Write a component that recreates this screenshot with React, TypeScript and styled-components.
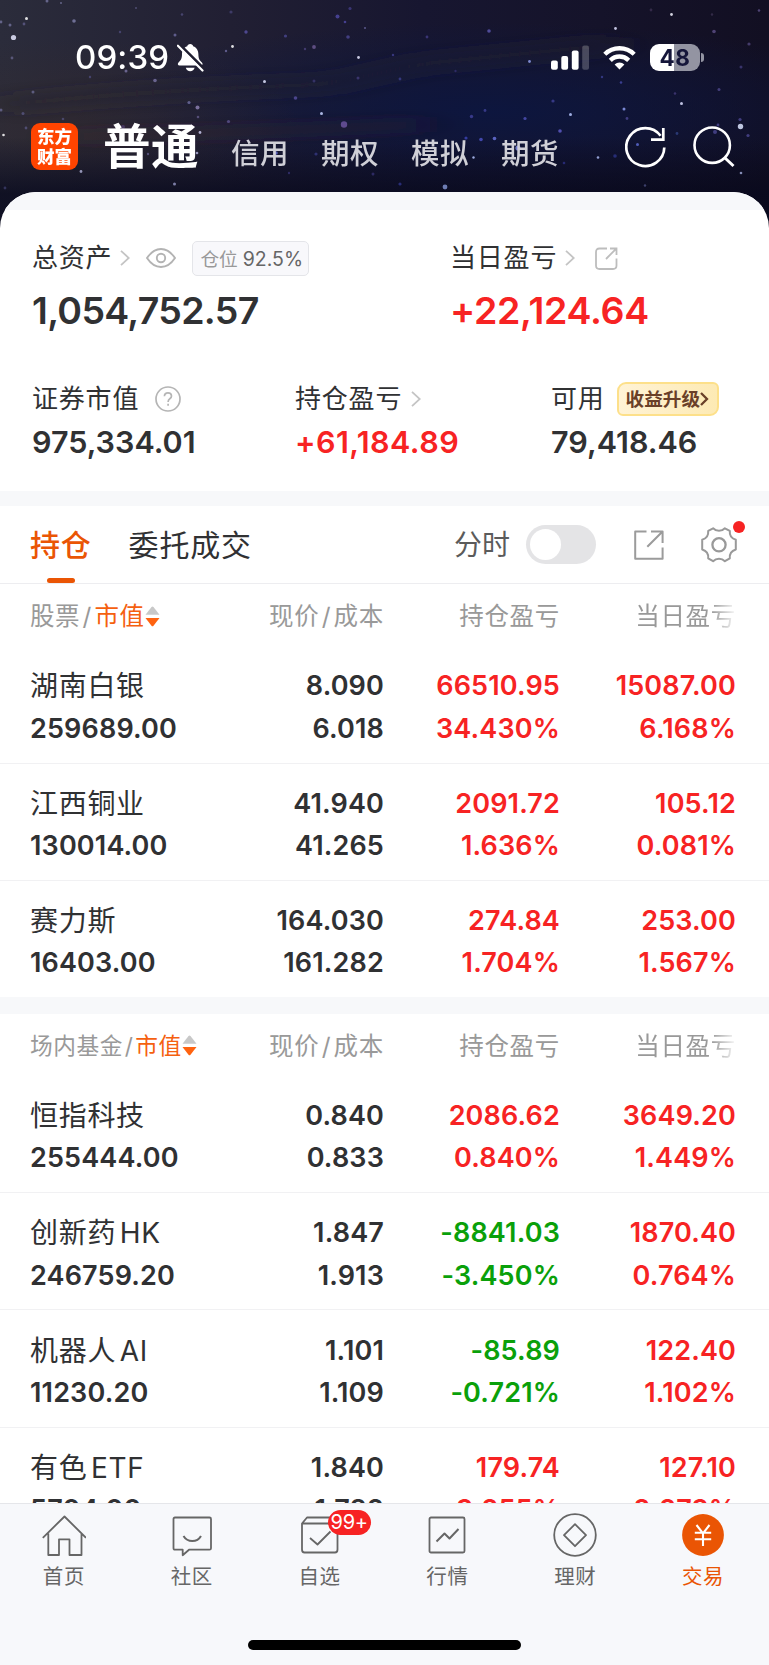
import React from 'react';
import styled, { createGlobalStyle } from 'styled-components';

const ORANGE = '#ea5504';
const RED = '#f72323';
const GREEN = '#0aa00a';
const INK = '#303133';

const GlobalStyle = createGlobalStyle`
  *, *::before, *::after { box-sizing: border-box; }
  html, body { margin: 0; padding: 0; }
  body {
    font-family: Inter, 'Noto Sans CJK SC', sans-serif;
    color: ${INK};
    background: #fff;
  }
`;

const Screen = styled.div`
  display: flex;
  flex-direction: column;
  width: 769px;
  height: 1665px;
  overflow: hidden;
  background: #fff;
`;

/* ---------- header ---------- */

const Header = styled.header`
  position: relative;
  flex: none;
  height: 228px;
  padding-top: 36px;
  color: #fff;
  background:
    linear-gradient(180deg, transparent 60%, rgba(7, 8, 28, 0.75) 85%),
    radial-gradient(ellipse 230px 90px at 70px 128px, rgba(52, 42, 44, 0.55), transparent 100%),
    radial-gradient(ellipse 420px 90px at 490px 112px, rgba(12, 22, 64, 0.9), transparent 100%),
    linear-gradient(90deg, #2b2c3b 0%, #211f33 30%, #171630 55%, #15132a 78%, #120f22 100%);
`;

const Sky = styled.svg`
  position: absolute;
  inset: 0;
`;

const StatusBar = styled.div`
  position: relative;
  display: flex;
  align-items: center;
  height: 42px;
  padding: 0 69px 0 75px;
`;

const Clock = styled.span`
  width: 102px;
  font-size: 33px;
  font-weight: 500;
  line-height: 42px;
  letter-spacing: 0.1px;
`;

const StatusIcons = styled.div`
  display: flex;
  align-items: center;
  gap: 14px;
  margin-left: auto;
`;

const Battery = styled.div`
  position: relative;
  width: 50px;
  height: 27px;
  border-radius: 9px;
  background: linear-gradient(90deg, #fff 48%, #9394a2 48%);
  color: #15163a;
  font-size: 22.5px;
  font-weight: 700;
  line-height: 27px;
  letter-spacing: 0.5px;
  text-align: center;

  &::after {
    content: '';
    position: absolute;
    left: 51px;
    top: 9px;
    width: 3px;
    height: 9px;
    border-radius: 0 4px 4px 0;
    background: #9394a2;
  }
`;

const AccountBar = styled.div`
  position: relative;
  display: flex;
  align-items: center;
  height: 47px;
  margin-top: 45px;
  padding: 0 34px 0 31px;
`;

const Logo = styled.div`
  display: flex;
  flex-direction: column;
  justify-content: center;
  align-items: center;
  width: 47px;
  height: 47px;
  border-radius: 9px;
  background: #ff4400;
  font-size: 17.5px;
  font-weight: 900;
  line-height: 19.5px;
`;

const ActiveAccount = styled.span`
  width: 128px;
  margin-left: 25px;
  font-size: 47.5px;
  font-weight: 700;
  line-height: 47px;
  letter-spacing: 0.5px;
`;

const Account = styled.span`
  width: 90px;
  padding-top: 15px;
  color: #d0d0d7;
  font-size: 28.5px;
  font-weight: 500;
  line-height: 34px;
  letter-spacing: 0.6px;
  white-space: nowrap;
`;

const HeaderActions = styled.div`
  display: flex;
  gap: 26px;
  margin-left: auto;
`;

/* ---------- summary ---------- */

const Sheet = styled.main`
  position: relative;
  display: flex;
  flex-direction: column;
  flex: 1;
  min-height: 0;
  margin-top: -36.5px;
  border-radius: 36px 36px 0 0;
  background: #fff;
  overflow: hidden;
`;

const Summary = styled.section`
  flex: none;
  height: 280.5px;
  padding: 28.4px 0 0 32px;
`;

const SummaryRow = styled.div<{ $columns: string }>`
  display: grid;
  grid-template-columns: ${(p) => p.$columns};
`;

const SecondRow = styled(SummaryRow)`
  margin-top: 34.2px;
`;

const Label = styled.div`
  display: flex;
  align-items: center;
  height: 40px;
  font-size: 26px;
  line-height: 40px;
  letter-spacing: 0.8px;
  white-space: nowrap;

  svg { flex: none; }
`;

const Total = styled.div<{ $color?: string }>`
  height: 66px;
  font-size: 37.5px;
  font-weight: 600;
  line-height: 66px;
  letter-spacing: ${(p) => (p.$color ? -0.3 : -0.7)}px;
  color: ${(p) => p.$color ?? INK};
`;

const Amount = styled.div<{ $color?: string }>`
  font-size: 30.5px;
  font-weight: 600;
  line-height: 46px;
  letter-spacing: ${(p) => (p.$color ? 0.45 : 0)}px;
  color: ${(p) => p.$color ?? INK};
`;

const PositionTag = styled.div`
  height: 35px;
  width: 117px;
  margin-left: 16px;
  padding-left: 7px;
  border: 1px solid #e4e5e9;
  border-radius: 5px;
  background: #f8f8fb;
  color: #666;
  font-size: 19.5px;
  line-height: 34px;
  letter-spacing: 0;

  span { color: #999; font-size: 18.7px; margin-right: 5px; }
`;

const Upgrade = styled.div`
  display: flex;
  align-items: center;
  width: 102px;
  height: 34px;
  margin-left: 12px;
  padding-left: 7px;
  border: 2px solid #fde08a;
  border-radius: 9px 6px 9px 6px;
  background: linear-gradient(90deg, #fff3d6, #fdeab4);
  color: #6a4028;
  font-size: 18.6px;
  font-weight: 700;
  line-height: 30px;
  letter-spacing: 0;
`;

const Band = styled.div<{ $height: number }>`
  flex: none;
  height: ${(p) => p.$height}px;
  background: #f7f8fa;
`;

/* ---------- tabs ---------- */

const Tabs = styled.nav`
  display: flex;
  align-items: center;
  flex: none;
  height: 78.5px;
  padding: 0 32px 0 30px;
  border-bottom: 1px solid #ededf0;
`;

const Tab = styled.div<{ $active?: boolean }>`
  position: relative;
  height: 77.5px;
  margin-right: 37px;
  color: ${(p) => (p.$active ? ORANGE : INK)};
  font-size: 30px;
  font-weight: ${(p) => (p.$active ? 500 : 400)};
  line-height: 78px;
  letter-spacing: 0.8px;

  &::after {
    content: '';
    display: ${(p) => (p.$active ? 'block' : 'none')};
    position: absolute;
    left: 17px;
    bottom: 0;
    width: 27.5px;
    height: 5.5px;
    border-radius: 3px;
    background: ${ORANGE};
  }
`;

const TabTools = styled.div`
  display: flex;
  align-items: center;
  margin-left: auto;
  padding-top: 0.8px;
  color: #5b5b5b;
  font-size: 28px;
  line-height: 40px;
`;

const Toggle = styled.div`
  width: 70px;
  height: 39px;
  margin: 0 38px 0 16px;
  padding: 4px;
  border-radius: 20px;
  background: #e4e4e6;

  &::after {
    content: '';
    display: block;
    width: 31px;
    height: 31px;
    border-radius: 50%;
    background: #fff;
  }
`;

const Settings = styled.div`
  position: relative;
  width: 36px;
  height: 36px;
  margin-left: 37px;

  &::after {
    content: '';
    position: absolute;
    top: -6px;
    right: -7.5px;
    width: 12px;
    height: 12px;
    border-radius: 50%;
    background: ${RED};
  }
`;

/* ---------- holdings ---------- */

const columns = '203px 151px 176px 176px';

const ListHeader = styled.div`
  display: grid;
  grid-template-columns: ${columns};
  flex: none;
  height: 62.2px;
  padding-left: 30px;
  color: #999;
  font-size: 24.5px;
  line-height: 64px;
  text-align: right;
  letter-spacing: 0.7px;
  white-space: nowrap;
`;

const Slash = styled.span`
  margin: 0 2.3px;
`;

const SortCell = styled.div<{ $compact?: boolean }>`
  display: flex;
  align-items: center;
  height: 64px;
  font-size: ${(p) => (p.$compact ? 22.7 : 24.5)}px;
  letter-spacing: ${(p) => (p.$compact ? 0.6 : 0.6)}px;

  b { color: #f5600f; font-weight: 400; }
  ${Slash} { margin: 0 ${(p) => (p.$compact ? 1.7 : 2.4)}px; }
`;

const FadingCell = styled.div`
  mask-image: linear-gradient(90deg, #000 86%, transparent 101%);
`;

const Holding = styled.div`
  display: grid;
  grid-template-columns: ${columns};
  flex: none;
  height: 117.33px;
  padding: 19.2px 0 0 30px;
  border-bottom: 1px solid #f1f1f3;
  font-size: 27px;
  font-weight: 600;
  line-height: 42.4px;
  letter-spacing: 0.15px;
  text-align: right;
  white-space: nowrap;

  &:last-child { height: 116.33px; border-bottom: 0; }
`;

const NameCell = styled.div`
  text-align: left;
`;

const Name = styled.div`
  font-size: 28px;
  font-weight: 400;
  letter-spacing: 0.7px;
  word-spacing: -5px;
`;

const ValueCell = styled.div<{ $color?: string }>`
  color: ${(p) => p.$color ?? INK};
`;

const HoldingList = styled.section`
  display: flex;
  flex-direction: column;
  flex: none;
`;

const Scroller = styled.div`
  flex: 1;
  min-height: 0;
  overflow: hidden;
`;

/* ---------- bottom bar ---------- */

const BottomBar = styled.footer`
  display: flex;
  flex-direction: column;
  align-items: center;
  flex: none;
  height: 162px;
  border-top: 1px solid #e5e6ea;
  background: #f7f8fb;
`;

const NavItems = styled.div`
  display: grid;
  grid-template-columns: repeat(6, 1fr);
  width: 100%;
  height: 135.5px;
  padding: 8.5px 2px 0 0;
`;

const NavItem = styled.div<{ $active?: boolean }>`
  position: relative;
  display: flex;
  flex-direction: column;
  align-items: center;
  color: ${(p) => (p.$active ? ORANGE : '#666')};
  font-size: 20.5px;
  line-height: 34px;
  letter-spacing: 0.6px;
`;

const Badge = styled.span`
  position: absolute;
  top: -3px;
  left: 72px;
  width: 43px;
  height: 25px;
  border-radius: 13px;
  background: ${RED};
  color: #fff;
  font-size: 20px;
  line-height: 25px;
  letter-spacing: -0.2px;
  text-align: center;
`;

const HomeIndicator = styled.div`
  width: 273px;
  height: 10px;
  border-radius: 5px;
  background: #000;
`;

const Gap = styled.span<{ $w: number }>`
  flex: none;
  width: ${(p) => p.$w}px;
`;

/* ---------- drawings ---------- */

const stars: [number, number, number, string][] = [
  [13.5, 37.5, 2.6, '#e6e8ff'], [26.5, 18.5, 1.5, '#fff'], [10, 25, 1.5, '#6f6f98'], [24, 24, 1.4, '#5c5a85'],
  [1, 22, 1.4, '#6f6f98'], [47, 1, 1.5, '#6f6f98'], [61, 3, 1, '#6f6f98'], [74, 21, 1.8, '#7b7ba6'],
  [12, 58, 1.4, '#615f85'], [33, 92, 1.5, '#66648c'], [1, 110, 1.5, '#66648c'], [23, 113.5, 1.5, '#55537c'],
  [3.5, 135, 1.3, '#fff'], [26, 128, 1.4, '#55537c'], [63, 119, 1.3, '#4f4c73'], [81, 171.5, 1.4, '#a9aad0'],
  [5, 188, 1.4, '#3b3a66'], [136, 8, 1, '#55537c'], [182, 14.5, 1.3, '#4c4a77'], [120, 32, 1.2, '#4c4a77'],
  [175, 35, 1.5, '#6a679b'], [155, 80.5, 1.8, '#75709f'], [90, 77, 1.2, '#4c4a77'], [126, 71, 1.5, '#75709f'],
  [189, 102.5, 1.6, '#6b6a9c'], [197.5, 107.5, 2, '#8b7fb0'], [198, 117, 1.3, '#5d5684'], [200, 132.5, 1.4, '#c9c8ec'],
  [123, 127, 2, '#4d3c66'], [174.5, 184, 1.5, '#8f90bd'], [197, 153, 1.3, '#aaa9d4'], [148, 154, 1.2, '#5d5684'],
  [232.5, 46.5, 1.4, '#fff'], [226, 51, 1.2, '#6a679b'], [246, 32, 1.7, '#5650a0'], [231, 12, 1.6, '#423f70'],
  [285.5, 36, 1.6, '#48448c'], [314, 47, 1.9, '#6a5790'], [305, 49, 1.2, '#494277'], [337.5, 16.5, 2, '#4d48a0'],
  [350, 8.5, 1.6, '#3f3b80'], [345, 22, 1.3, '#4d48a0'], [348, 37, 1.8, '#4a458e'], [358.5, 57.5, 1.4, '#e8e8ff'],
  [365, 28, 1, '#66649c'], [264.5, 81.5, 1.5, '#e2e5ff'], [314, 81, 1.5, '#3b366c'], [358, 78, 1.5, '#3e3975'],
  [295.5, 98, 1.8, '#554d9b'], [321.5, 113.5, 1.5, '#c5d1ff'], [344, 124.5, 3.2, '#6b539d'], [228.5, 121.5, 1.6, '#59508a'],
  [316, 154, 1.6, '#34357c'], [276, 153, 1.8, '#6870cc'], [373, 174, 1.5, '#31306d'], [289, 173, 1.2, '#31306d'],
  [489, 31, 1.8, '#5a55aa'], [427, 37, 1.4, '#3f3b80'], [393, 55, 1.2, '#3f3f88'], [529.5, 61.5, 1.4, '#8e9bea'],
  [400, 79, 1.4, '#3b3c88'], [455.5, 71, 1.2, '#31306d'], [615.5, 28.5, 1.4, '#dfe0ff'], [671.5, 14.5, 1.4, '#f3f3ff'],
  [714, 31.5, 1.8, '#5a4c82'], [651, 10, 1.4, '#38304f'], [712, 14.5, 1.2, '#38304f'], [759, 10.5, 1.3, '#5a4c82'],
  [749, 44, 1.6, '#4d4377'], [741, 67, 1.5, '#3e3975'], [719, 89.5, 1.5, '#4d4788'], [681.5, 103.5, 1.5, '#dcdfff'],
  [675, 93.5, 1.3, '#3e3975'], [621, 82.5, 1.3, '#4347a0'], [602, 77, 1.2, '#3c3e8d'], [553, 101, 1.6, '#3d3f93'],
  [485, 110.5, 1.4, '#3d3f93'], [471.5, 116.5, 1.7, '#3f3f97'], [570.5, 114.5, 1.5, '#b7c7ff'], [525, 118.5, 1.6, '#4d50b5'],
  [624, 109, 1.5, '#8d9cf0'], [627, 118.5, 1.4, '#4a458e'], [560, 131, 1.8, '#5c5ac4'], [466, 138, 1.6, '#3b42b0'],
  [481, 139.5, 1.8, '#4a50c0'], [494.5, 138.5, 1.8, '#6872d9'], [518, 148, 2.6, '#7f8ce5'], [598, 157.5, 1.3, '#a8b6ef'],
  [473.5, 157.5, 1.2, '#b7c7ff'], [637.5, 144.5, 1.5, '#5c68cf'], [740.5, 126.5, 2.7, '#dde6ff'], [740, 119.5, 1.6, '#4a458e'],
  [715, 132, 2, '#4a458e'], [748, 135.5, 1.6, '#4a458e'], [677, 133.5, 1.4, '#2e3f7f'], [741, 173, 1.3, '#9aa3d0'],
  [445, 187, 2.4, '#7f90cc'], [400, 184, 1.6, '#2f3184'], [615, 156, 1.8, '#2c3184'], [645, 185.5, 1.2, '#464a78'],
  [718, 125, 1.4, '#4a458e'], [564, 163, 1.3, '#2b3080'],
];

const StarField = () => (
  <Sky width="769" height="228" viewBox="0 0 769 228">
    <defs>
      <filter id="haze" x="-20%" y="-200%" width="140%" height="500%">
        <feGaussianBlur stdDeviation="22 7" />
      </filter>
      <filter id="glow"><feGaussianBlur stdDeviation="0.6" /></filter>
    </defs>
    <g filter="url(#haze)" fill="none">
      <path d="M0 106Q110 92 330 84L420 64L620 44" stroke="#2b2530" strokeWidth="16" opacity="0.4" />
      <path d="M60 137Q240 133 430 124" stroke="#33262f" strokeWidth="8" opacity="0.45" />
    </g>
    <g filter="url(#glow)">
      {stars.map(([x, y, r, fill], i) => <circle key={i} cx={x} cy={y} r={r} fill={fill} opacity="0.85" />)}
    </g>
  </Sky>
);

const MutedBell = () => (
  <svg width="27" height="29" viewBox="0 0 27 29" fill="#fff">
    <path d="M13.2 1C11.5 1 10.5 2 10.3 3.2C6.500 4.500 5 7.800 5 11.500C5 16 3.500 17.500 1.500 19.500C0.300 20.800 0.800 22.500 2.500 22.500H23.800C25.500 22.500 26.200 20.800 24.900 19.500C22.800 17.500 21.400 16 21.400 11.500C21.400 7.800 19.900 4.500 16.100 3.200C15.900 2 14.900 1 13.200 1Z" />
    <path d="M8.800 24.800H17.600C17 27 15.400 28.300 13.200 28.300S9.400 27 8.800 24.800Z" />
    <path d="M2.200 1.200L27 25.800" stroke="#201f31" strokeWidth="3" />
    <path d="M0.900 2.700L25.500 27.500" stroke="#fff" strokeWidth="2.200" strokeLinecap="round" />
  </svg>
);

const Signal = () => (
  <svg width="38" height="25" viewBox="0 0 38 25" fill="#fff">
    <rect x="0" y="15.500" width="6.800" height="9.200" rx="2" />
    <rect x="10.300" y="11" width="6.800" height="13.700" rx="2" />
    <rect x="20.800" y="5.500" width="6.800" height="19.200" rx="2" />
    <rect x="31.200" y="0.500" width="6.800" height="24.200" rx="2" opacity="0.22" />
  </svg>
);

const Wifi = () => (
  <svg width="33" height="25" viewBox="0 0 33 25" fill="none" stroke="#fff" strokeWidth="4.400">
    <path d="M1.800 9.200A21 21 0 0 1 31.200 9.200" />
    <path d="M7.300 15.300A13.200 13.200 0 0 1 25.700 15.300" />
    <path d="M16.500 24.500L11.600 19.600A7 7 0 0 1 21.400 19.600Z" fill="#fff" stroke="none" />
  </svg>
);

const Refresh = () => (
  <svg width="42" height="42" viewBox="0 0 42 42" fill="none" stroke="#fff" strokeWidth="2.700">
    <path d="M39.300 21.500A19 19 0 1 1 35.600 9.800" />
    <path d="M38.300 2V13.600H26" />
  </svg>
);

const Search = () => (
  <svg width="42" height="42" viewBox="0 0 42 42" fill="none" stroke="#fff" strokeWidth="2.600">
    <circle cx="19.200" cy="19.200" r="17.700" />
    <path d="M31.500 31.500L40.500 40" strokeWidth="3" />
  </svg>
);

const Chevron = () => (
  <svg width="10" height="16" viewBox="0 0 10 16" fill="none" stroke="#c4c4c4" strokeWidth="1.800">
    <path d="M1 0.800L8.800 8L1 15.200" />
  </svg>
);

const Eye = () => (
  <svg width="30" height="20" viewBox="0 0 30 20" fill="none" stroke="#b3b3b3" strokeWidth="1.900">
    <path d="M1 10Q7 1 15 1T29 10Q23 19 15 19T1 10Z" />
    <circle cx="15" cy="10" r="4.200" />
  </svg>
);

const Help = () => (
  <svg width="26" height="26" viewBox="0 0 26 26" fill="none" stroke="#b5b5b5" strokeWidth="1.700">
    <circle cx="13" cy="13" r="12" />
    <path d="M9.400 10.200Q9.600 6.800 13 6.800T16.500 10Q16.500 11.600 14.800 12.800T13.100 16" />
    <path d="M13.100 17.800V19.700" />
  </svg>
);

const ShareSmall = () => (
  <svg width="23" height="23" viewBox="0 0 23 23" fill="none" stroke="#bdbdbd" strokeWidth="1.800">
    <path d="M12 1.500H4.500Q1 1.500 1 5V18.500Q1 22 4.500 22H18Q21.500 22 21.500 18.500V11.500" />
    <path d="M11 12L21 1.800M15 1.500H21.500V8" />
  </svg>
);

const Share = () => (
  <svg width="30" height="30" viewBox="0 0 30 30" fill="none" stroke="#9b9b9b" strokeWidth="2" strokeLinejoin="round">
    <path d="M12.500 1.500H1.200V28.700H28.600V17.500" />
    <path d="M13.300 16.700L28.300 1.700M17 1.500H28.600V13" />
  </svg>
);

const Gear = () => (
  <svg width="36" height="36" viewBox="0 0 36 36" fill="none" stroke="#999" strokeWidth="2" strokeLinejoin="round">
    <path d="M7.200 3.900L12.100 1.300Q14.500 3.800 18 3.800T23.900 1.300L28.800 3.900Q28.200 10.800 34.800 12.700V22.500Q28.200 24.500 28.800 31.300L23.900 34.200Q21.500 31.700 18 31.700T12.100 34.200L7.200 31.300Q7.800 24.500 1.200 22.500V12.700Q7.800 10.800 7.200 3.900Z" />
    <circle cx="18" cy="17.800" r="6.600" strokeWidth="2.300" />
  </svg>
);

const SortMark = () => (
  <svg width="15" height="21" viewBox="0 0 15 21">
    <path d="M0.500 8.700L6.500 1Q7.500 0 8.500 1L14.500 8.700Z" fill="#c8c8c8" />
    <path d="M0.500 12L6.500 19.700Q7.500 20.700 8.500 19.700L14.500 12Z" fill="#ff6310" />
  </svg>
);

const NavArt = styled.svg.attrs({ width: 44, height: 44, viewBox: '0 0 44 44' })`
  flex: none;
  margin-bottom: 3px;
  fill: none;
  stroke: currentColor;
  stroke-width: 1.8;
  stroke-linejoin: round;
`;

const HomeIcon = () => (
  <NavArt>
    <path d="M0.800 25.300L22.500 4L44 25.300M6.300 21V42.500H17V26.800H27.500V42.500H39.500V21" transform="translate(0 -0.500)" />
  </NavArt>
);

const CommunityIcon = () => (
  <NavArt>
    <path d="M5 4.500H39.500Q41 4.500 41 6V35.200Q41 36.700 39.500 36.700H19L12.700 42.200V36.700H5Q3.500 36.700 3.500 35.200V6Q3.500 4.500 5 4.500Z" />
    <path d="M13.500 23Q16.500 28 22.300 28T31 23" strokeWidth="2" />
  </NavArt>
);

const WatchlistIcon = () => (
  <NavArt>
    <path d="M4 10.500L9 4.500H34L39.500 10.500V36.500Q39.500 39.500 37 39.500H6.500Q4 39.500 4 36.500ZM4 10.500H39.500" />
    <path d="M12 25L19.500 31.500L32.500 18.500" />
  </NavArt>
);

const MarketIcon = () => (
  <NavArt>
    <rect x="4.500" y="4.500" width="35" height="35" rx="1.500" />
    <path d="M11.500 28.500L19.500 20.500L24.500 25.500L33.500 16" strokeWidth="2" />
  </NavArt>
);

const WealthIcon = () => (
  <NavArt>
    <circle cx="22" cy="22" r="20.800" />
    <path d="M22 11.200L33 22.200L22 33.200L11 22.200Z" />
  </NavArt>
);

const TradeIcon = () => (
  <NavArt>
    <circle cx="22" cy="22" r="20.900" fill={ORANGE} stroke="none" />
    <path d="M15.500 12L22 20.300L28.500 12M22 20.300V33M13.800 19.800H30.200M13.800 26.300H30.200" stroke="#fff" strokeWidth="2.100" />
  </NavArt>
);

/* ---------- data ---------- */

type Position = {
  name: string;
  value: string;
  price: [string, string];
  total: [string, string];
  day: [string, string];
};

const stocks: Position[] = [
  { name: '湖南白银', value: '259689.00', price: ['8.090', '6.018'], total: ['66510.95', '34.430%'], day: ['15087.00', '6.168%'] },
  { name: '江西铜业', value: '130014.00', price: ['41.940', '41.265'], total: ['2091.72', '1.636%'], day: ['105.12', '0.081%'] },
  { name: '赛力斯', value: '16403.00', price: ['164.030', '161.282'], total: ['274.84', '1.704%'], day: ['253.00', '1.567%'] },
];

const funds: Position[] = [
  { name: '恒指科技', value: '255444.00', price: ['0.840', '0.833'], total: ['2086.62', '0.840%'], day: ['3649.20', '1.449%'] },
  { name: '创新药 HK', value: '246759.20', price: ['1.847', '1.913'], total: ['-8841.03', '-3.450%'], day: ['1870.40', '0.764%'] },
  { name: '机器人 AI', value: '11230.20', price: ['1.101', '1.109'], total: ['-85.89', '-0.721%'], day: ['122.40', '1.102%'] },
  { name: '有色 ETF', value: '5704.00', price: ['1.840', '1.782'], total: ['179.74', '3.255%'], day: ['127.10', '2.273%'] },
];

const tint = (text: string) => (text.startsWith('-') ? GREEN : RED);

const Pair = ({ lines, color }: { lines: [string, string]; color?: string }) => (
  <ValueCell $color={color}>
    <div>{lines[0]}</div>
    <div>{lines[1]}</div>
  </ValueCell>
);

const Holdings = ({ title, compact, items }: { title: string; compact?: boolean; items: Position[] }) => (
  <HoldingList>
    <ListHeader>
      <SortCell $compact={compact}>{title}<Slash>/</Slash><b>市值</b><SortMark /></SortCell>
      <div>现价<Slash>/</Slash>成本</div>
      <div>持仓盈亏</div>
      <FadingCell>当日盈亏</FadingCell>
    </ListHeader>
    {items.map((item) => (
      <Holding key={item.name}>
        <NameCell>
          <Name>{item.name}</Name>
          <div>{item.value}</div>
        </NameCell>
        <Pair lines={item.price} />
        <Pair lines={item.total} color={tint(item.total[0])} />
        <Pair lines={item.day} color={tint(item.day[0])} />
      </Holding>
    ))}
  </HoldingList>
);

export default function App() {
  return (
    <>
      <GlobalStyle />
      <Screen>
        <Header>
          <StarField />
          <StatusBar>
            <Clock>09:39</Clock>
            <MutedBell />
            <StatusIcons>
              <Signal />
              <Wifi />
              <Battery>48</Battery>
            </StatusIcons>
          </StatusBar>
          <AccountBar>
            <Logo><span>东方</span><span>财富</span></Logo>
            <ActiveAccount>普通</ActiveAccount>
            <Account>信用</Account>
            <Account>期权</Account>
            <Account>模拟</Account>
            <Account>期货</Account>
            <HeaderActions><Refresh /><Search /></HeaderActions>
          </AccountBar>
        </Header>

        <Sheet>
          <Band $height={18.5} />
          <Summary>
            <SummaryRow $columns="418px 1fr">
              <div>
                <Label>总资产<Gap $w={8} /><Chevron /><Gap $w={16} /><Eye /><PositionTag><span>仓位</span>92.5%</PositionTag></Label>
                <Total>1,054,752.57</Total>
              </div>
              <div>
                <Label>当日盈亏<Gap $w={8} /><Chevron /><Gap $w={20} /><ShareSmall /></Label>
                <Total $color={RED}>+22,124.64</Total>
              </div>
            </SummaryRow>
            <SecondRow $columns="263px 256px 1fr">
              <div>
                <Label>证券市值<Gap $w={16} /><Help /></Label>
                <Amount>975,334.01</Amount>
              </div>
              <div>
                <Label>持仓盈亏<Gap $w={9} /><Chevron /></Label>
                <Amount $color={RED}>+61,184.89</Amount>
              </div>
              <div>
                <Label>
                  可用
                  <Upgrade>
                    收益升级
                    <svg width="9" height="14" viewBox="0 0 9 14" fill="none" stroke="#6a4028" strokeWidth="2.300">
                      <path d="M1 1L7 7L1 13" />
                    </svg>
                  </Upgrade>
                </Label>
                <Amount>79,418.46</Amount>
              </div>
            </SecondRow>
          </Summary>

          <Band $height={15} />

          <Tabs>
            <Tab $active>持仓</Tab>
            <Tab>委托成交</Tab>
            <TabTools>
              分时
              <Toggle />
              <Share />
              <Settings><Gear /></Settings>
            </TabTools>
          </Tabs>

          <Scroller>
            <Holdings title="股票" items={stocks} />
            <Band $height={16.4} />
            <Holdings title="场内基金" compact items={funds} />
          </Scroller>
        </Sheet>

        <BottomBar>
          <NavItems>
            <NavItem><HomeIcon />首页</NavItem>
            <NavItem><CommunityIcon />社区</NavItem>
            <NavItem><WatchlistIcon />自选<Badge>99+</Badge></NavItem>
            <NavItem><MarketIcon />行情</NavItem>
            <NavItem><WealthIcon />理财</NavItem>
            <NavItem $active><TradeIcon />交易</NavItem>
          </NavItems>
          <HomeIndicator />
        </BottomBar>
      </Screen>
    </>
  );
}
